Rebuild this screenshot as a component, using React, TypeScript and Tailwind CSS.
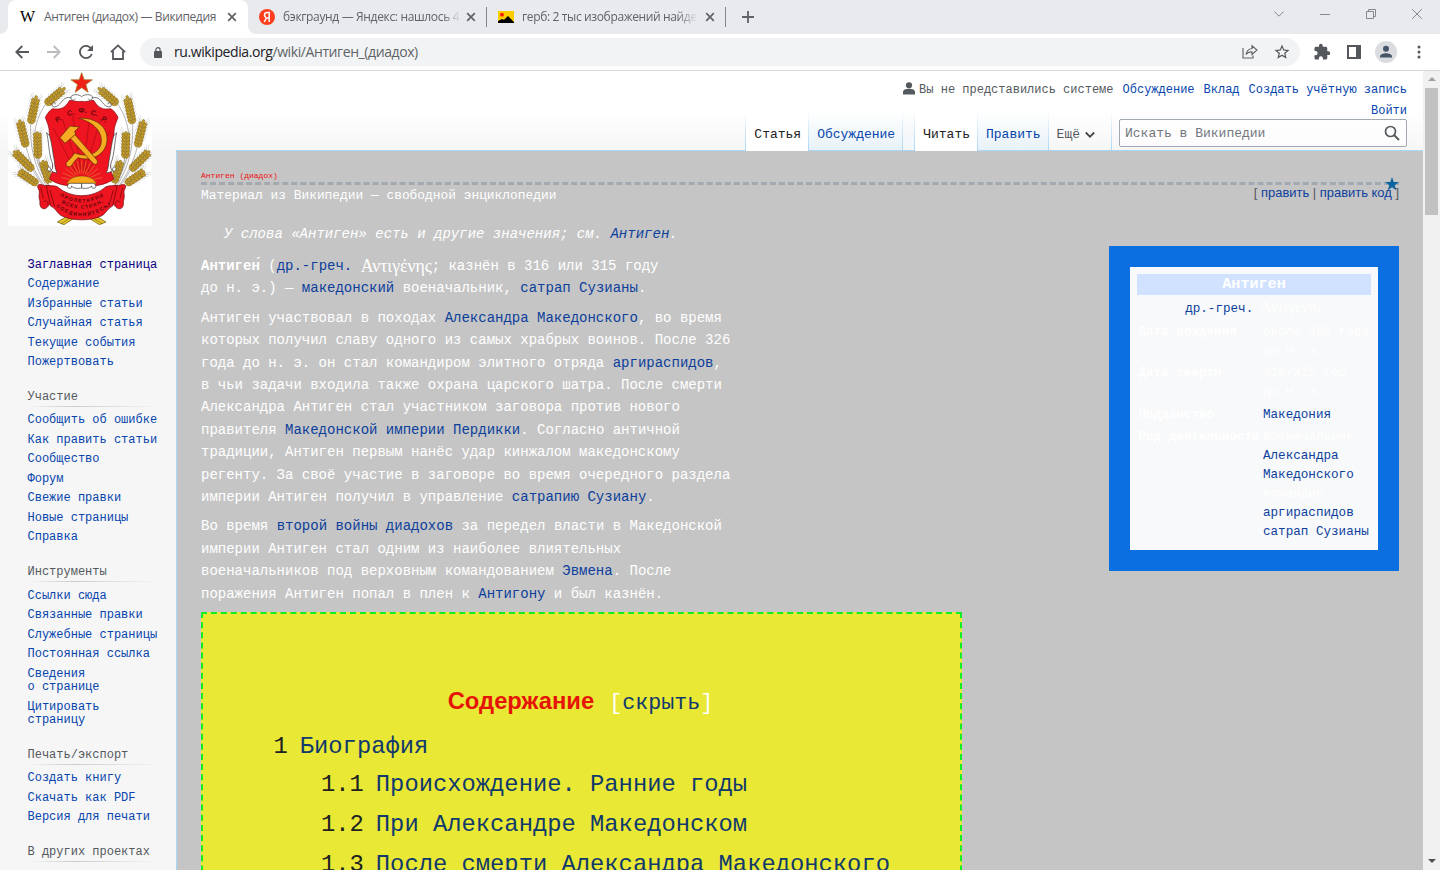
import type { ReactNode } from 'react';

const MONO = "font-['Liberation_Mono','Courier_New',monospace]";
const UI = "font-['Open_Sans','Noto_Sans',sans-serif]";

/* ---------- Browser chrome ---------- */

function CloseX({ className = '' }: { className?: string }) {
  return (
    <svg viewBox="0 0 10 10" className={`h-[10px] w-[10px] shrink-0 ${className}`}>
      <path d="M1.2 1.2 8.8 8.8M8.8 1.2 1.2 8.8" stroke="#5f6368" strokeWidth="1.7" fill="none" />
    </svg>
  );
}

function TabStrip() {
  return (
    <div className="flex h-[34px] shrink-0 items-stretch bg-[#e8eaed] text-[12px]">
      <div className="flex w-[8px] items-end bg-white">
        <div className="h-full w-[8px] rounded-br-[8px] bg-[#e8eaed]" />
      </div>
      <div className="flex w-[240px] items-center rounded-t-[8px] bg-white pl-[12px]">
        <span className="w-[24px] font-['Liberation_Serif',serif] text-[16px] leading-none tracking-[-1px] text-black">W</span>
        <span className="w-[175px] whitespace-nowrap text-[12px] tracking-[-0.38px] text-[#5f6368]">Антиген (диадох) — Википедия</span>
        <CloseX className="ml-[8px]" />
      </div>
      <div className="flex w-[8px] bg-white">
        <div className="h-full w-[8px] rounded-bl-[8px] bg-[#e8eaed]" />
      </div>
      <div className="flex w-[230px] items-center">
        <svg viewBox="0 0 16 16" className="ml-[3px] h-[16px] w-[16px]">
          <circle cx="8" cy="8" r="8" fill="#fc3f1d" />
          <path d="M10.2 13V3.500H8.4C6.600 3.500 5.500 4.600 5.500 6.100c0 1.300.7 2.100 1.900 2.900L5.200 13M10.200 9H8" fill="none" stroke="#fff" strokeWidth="1.5" />
        </svg>
        <span className="ml-[8px] w-[178px] overflow-hidden whitespace-nowrap text-[12px] tracking-[-0.34px] text-[#5f6368] [mask-image:linear-gradient(to_right,#000_90%,transparent)]">
          бэкграунд — Яндекс: нашлось 4
        </span>
        <CloseX className="ml-[5px]" />
      </div>
      <div className="my-[7px] w-px bg-[#80868b]" />
      <div className="flex w-[238px] items-center">
        <svg viewBox="0 0 16 12" className="ml-[11px] h-[12px] w-[16px]">
          <rect width="16" height="12" fill="#fc0" />
          <circle cx="4" cy="3.7" r="1.9" fill="#f8170d" />
          <path d="M0 12V10l4-2 2 .7L10 5l6 6v1z" fill="#000" />
        </svg>
        <span className="ml-[8px] w-[176px] overflow-hidden whitespace-nowrap text-[12px] tracking-[-0.36px] text-[#5f6368] [mask-image:linear-gradient(to_right,#000_88%,transparent)]">
          герб: 2 тыс изображений найде
        </span>
        <CloseX className="ml-[7px]" />
      </div>
      <div className="my-[7px] w-px bg-[#80868b]" />
      <div className="flex flex-1 items-center">
        <svg viewBox="0 0 12 12" className="ml-[16px] h-[12px] w-[12px]">
          <path d="M6 0v12M0 6h12" stroke="#5f6368" strokeWidth="1.8" />
        </svg>
      </div>
      <div className="flex items-center gap-[36px] pb-[6px] pr-[18px]">
        <svg viewBox="0 0 10 10" className="h-[10px] w-[10px]">
          <path d="M.3 2.5 5 7.2l4.7-4.7" fill="none" stroke="#85888c" strokeWidth="1" />
        </svg>
        <svg viewBox="0 0 10 10" className="h-[10px] w-[10px]">
          <path d="M0 5.5h10" stroke="#85888c" />
        </svg>
        <svg viewBox="0 0 10 10" className="h-[10px] w-[10px]">
          <path d="M.5 2.5h7v7h-7zM2.500 2.500V.5h7v7H7.500" fill="none" stroke="#85888c" />
        </svg>
        <svg viewBox="0 0 10 10" className="h-[10px] w-[10px]">
          <path d="M.2.2l9.600 9.600M9.800.2.2 9.800" stroke="#85888c" fill="none" />
        </svg>
      </div>
    </div>
  );
}

function Toolbar() {
  return (
    <div className="flex h-[37px] shrink-0 items-center border-b border-[#d5d7da] bg-white">
      <svg viewBox="0 0 14 14" className="ml-[15px] h-[14px] w-[14px]">
        <path d="M14 7H1.500M7.300 1 1.300 7l6 6" fill="none" stroke="#54575b" strokeWidth="1.8" />
      </svg>
      <svg viewBox="0 0 14 14" className="ml-[18px] h-[14px] w-[14px]">
        <path d="M0 7h12.500M6.700 1l6 6-6 6" fill="none" stroke="#b9bbbe" strokeWidth="1.8" />
      </svg>
      <svg viewBox="0 0 14 14" className="ml-[18px] h-[14px] w-[14px]">
        <path d="M12.800 9A6.100 6.100 0 1 1 11.500 2.800L12.500 4" fill="none" stroke="#54575b" strokeWidth="1.8" />
        <path d="M14 0v6H8z" fill="#54575b" />
      </svg>
      <svg viewBox="0 0 16 16" className="ml-[17px] h-[16px] w-[16px]">
        <path d="M.9 8.200 8 1.400l7.100 6.800M3 7v8h10V7" fill="none" stroke="#54575b" strokeWidth="1.800" />
      </svg>
      <div className="ml-[14px] flex h-[28px] w-[1160px] items-center rounded-full bg-[#f1f3f4]">
        <svg viewBox="0 0 8 11" className="ml-[14px] h-[11px] w-[8px]">
          <rect y="4" width="8" height="7" rx=".8" fill="#54575b" />
          <path d="M1.900 4.500V2.800a2.100 2.100 0 0 1 4.200 0v1.700" fill="none" stroke="#54575b" strokeWidth="1.200" />
        </svg>
        <span className="ml-[12px] flex-1 whitespace-nowrap pb-px text-[14px] tracking-[-0.41px] text-[#5f6368]">
          <span className="text-[#202124]">ru.wikipedia.org</span>/wiki/Антиген_(диадох)
        </span>
        <svg viewBox="0 0 16 16" className="h-[16px] w-[16px]">
          <path d="M1 4v10h10v-2.500M10 1.800V4.500C6.500 5 4.700 7 4 10.500 5.500 8.500 7.300 7.800 10 7.800v2.600L15 6z" fill="none" stroke="#5f6368" strokeWidth="1.150" />
        </svg>
        <svg viewBox="0 0 24 24" className="ml-[15px] mr-[9px] h-[18px] w-[18px]">
          <path d="m22 9.240-7.190-.62L12 2 9.190 8.630 2 9.240l5.460 4.730L5.820 21 12 17.270 18.180 21l-1.630-7.030L22 9.240zM12 15.400l-3.760 2.270 1-4.280-3.320-2.880 4.380-.38L12 6.100l1.710 4.040 4.380.38-3.320 2.880 1 4.280L12 15.400z" fill="#54575b" />
        </svg>
      </div>
      <svg viewBox="0 0 24 24" className="ml-[13px] h-[18px] w-[18px]">
        <path d="M20.500 11H19V7c0-1.100-.9-2-2-2h-4V3.500a2.500 2.500 0 0 0-5 0V5H4c-1.100 0-2 .9-2 2v3.800h1.500a2.700 2.700 0 0 1 0 5.400H2V20c0 1.100.9 2 2 2h3.800v-1.500a2.700 2.700 0 0 1 5.400 0V22H17c1.100 0 2-.9 2-2v-4h1.500a2.500 2.500 0 0 0 0-5z" fill="#54575b" />
      </svg>
      <svg viewBox="0 0 14 14" className="ml-[16px] h-[14px] w-[14px]">
        <path d="M0 0h14v14H0zM2 2v10h7V2z" fill="#54575b" fillRule="evenodd" />
      </svg>
      <svg viewBox="0 0 22 22" className="ml-[14px] h-[22px] w-[22px]">
        <circle cx="11" cy="11" r="11" fill="#dadce0" />
        <circle cx="11" cy="7.800" r="3" fill="#475569" />
        <path d="M5 16.500v-1c0-2 3.500-3.200 6-3.200s6 1.200 6 3.200v1z" fill="#475569" />
      </svg>
      <svg viewBox="0 0 4 14" className="ml-[20px] h-[14px] w-[4px]">
        <circle cx="2" cy="2" r="1.500" fill="#54575b" />
        <circle cx="2" cy="7" r="1.500" fill="#54575b" />
        <circle cx="2" cy="12" r="1.500" fill="#54575b" />
      </svg>
    </div>
  );
}

/* ---------- Emblem ---------- */

const EARS: [number, number, number, number][] = [
  [138, 114, 190, 70],
  [92, 172, 108, 96],
  [78, 242, 60, 168],
  [114, 276, 112, 204],
  [98, 312, 46, 260],
  [112, 354, 62, 320],
  [148, 350, 130, 290],
];

function Ear({ x1, y1, x2, y2 }: { x1: number; y1: number; x2: number; y2: number }) {
  const len = Math.hypot(x2 - x1, y2 - y1);
  const angle = (Math.atan2(y2 - y1, x2 - x1) * 180) / Math.PI;
  const rows = Math.floor(len / 10);
  const steps = Array.from({ length: rows }, (_, i) => 4 + i * 10);
  return (
    <g transform={`translate(${x1} ${y1}) rotate(${angle})`}>
      {steps.map((s) => (
        <path key={`w${s}`} d={`M${s} 0l24-19M${s} 0l24 19M${s + 5} 0l24-14M${s + 5} 0l24 14`} stroke="#8d8d84" strokeWidth=".7" />
      ))}
      {steps.map((s) => (
        <g key={s} fill="#c09a2c" stroke="#6f5514" strokeWidth="1.1">
          <ellipse cx={s + 3} cy="-6" rx="9" ry="5" transform={`rotate(-28 ${s + 3} -6)`} />
          <ellipse cx={s + 3} cy="6" rx="9" ry="5" transform={`rotate(28 ${s + 3} 6)`} />
        </g>
      ))}
      <ellipse cx={len} cy="0" rx="8" ry="4.500" fill="#c09a2c" stroke="#6f5514" />
    </g>
  );
}

function WheatSide() {
  return (
    <g>
      <g fill="none" stroke="#555" strokeWidth="1.3">
        <path d="M150 365C95 280 85 190 138 112" />
        <path d="M145 368C100 300 90 240 92 172" />
        <path d="M140 368C110 330 90 290 78 242" />
        <path d="M152 368C128 330 118 300 116 276" />
        <path d="M140 372C120 350 110 330 98 312" />
      </g>
      {EARS.map(([x1, y1, x2, y2]) => (
        <Ear key={`${x1}-${y1}`} x1={x1} y1={y1} x2={x2} y2={y2} />
      ))}
    </g>
  );
}

const RAYS = [-80, -66, -52, -39, -26, -13, 0, 13, 26, 39, 52, 66, 80];

function Scroll() {
  return (
    <g fill="#fff" stroke="#333" strokeWidth="2">
      <path d="M245 92c-8-8-28-8-32 0-2 11 9 14 12 6M213 96c-20-8-28 14-38 22-12 9-22 4-18-5 3-5 10-3 9 2" />
      <path d="M140 200c6 22 6 54 12 76 3 12 7 16 6 28-2 14-16 14-16 5 0-7 7-8 9-3 2 12 12 14 20 14-8-14-6-30-10-46-4-22-6-44-12-64z" />
      <path d="M245 352h-28c-14-4-20 14-8 15 5 0 7-4 5-7 8 8 22 8 31 6z" />
    </g>
  );
}

function Emblem() {
  return (
    <svg viewBox="24 18 432 462" className="h-[154px] w-[144px] bg-white">
      <WheatSide />
      <g transform="translate(490 0) scale(-1 1)">
        <WheatSide />
      </g>
      <path
        d="M245 106C228 110 216 100 208 104c-12 22-28 28-50 24-8 4-16 14-22 26 4 14 12 26 12 48 0 24 2 50 8 72 4 20 4 44-8 64 16 14 42 20 62 22h70c20-2 46-8 62-22-12-20-12-44-8-64 6-22 8-48 8-72 0-22 8-34 12-48-6-12-14-22-22-26-22 4-38-2-50-24-8-4-20 6-37 2z"
        fill="#ee1420"
        stroke="#7d0b10"
        strokeWidth="2"
      />
      <g stroke="#a60d14" strokeWidth="2">
        <path d="M226 318 160 186M236 314 188 160M243 312 218 150M250 312 268 160M256 314 302 158M264 318 328 196" />
      </g>
      <g stroke="#e2752b" strokeWidth="2">
        {RAYS.map((a) => (
          <path key={a} d="M245 322V284" transform={`rotate(${a} 245 346)`} />
        ))}
      </g>
      <path d="M201 354c8-32 80-32 88 0z" fill="#f5a81c" stroke="#8f3b0a" strokeWidth="2" />
      <Scroll />
      <g transform="translate(490 0) scale(-1 1)">
        <Scroll />
      </g>
      <g fill="#6b080d" className="font-['Liberation_Sans',sans-serif] text-[22px] font-bold">
        <text x="166" y="168" transform="rotate(-28 172 160)">Р.</text>
        <text x="201" y="149" transform="rotate(-12 208 142)">С.</text>
        <text x="235" y="140">Ф.</text>
        <text x="272" y="148" transform="rotate(14 278 142)">С.</text>
        <text x="304" y="166" transform="rotate(28 310 160)">Р.</text>
      </g>
      <g fill="#f5ab22" stroke="#64300a" strokeWidth="2.2" strokeLinejoin="round">
        <path d="M236 157c46-4 88 22 85 66-2 40-44 66-87 52-8 6-14 16-20 24-8 8-20 0-14-10 8-8 18-18 24-28 34 14 76 4 80-34 2-34-28-60-68-70z" />
        <path d="m210 216 13-12 68 78c5 10-4 18-12 10z" />
        <path d="m180 215 30-35 28 3-14 13 3 8-32 28z" />
      </g>
      <path d="m245 20 7.500 21.500h24.500l-19.500 14 7 23.500L245 65l-19.500 14 7-23.500-19.500-14h24.500z" fill="#ef2016" stroke="#af7b2a" strokeWidth="2.500" />
      <path d="m172 468 40-24 18 8-38 24zM318 468l-40-24-18 8 38 24z" fill="#e4c529" stroke="#654e10" strokeWidth="2" />
      <path d="m182 474 38-24M308 474l-38-24" stroke="#654e10" strokeWidth="1.500" />
      <g fill="#ee1420" stroke="#6f090d" strokeWidth="2.200" strokeLinejoin="round">
        <path d="M150 360c-18 2-30-10-36-2-4 8 6 12 4 24-2 10 0 18 2 24-2 14 4 24 14 22 14-4 10-14 20-14l18 18z" />
        <path d="M340 360c18 2 30-10 36-2 4 8-6 12-4 24 2 10 0 18-2 24 2 14-4 24-14 22-14-4-10-14-20-14l-18 18z" />
        <path d="M138 358c14 2 24 0 34 4 40 36 106 36 146 0 10-4 20-2 34-4l-14 62c-14 6-18 18-30 28-34 18-92 18-126 0-12-10-16-22-30-28z" />
        <path d="M130 408c10-8 18 2 12 10M360 408c-10-8-18 2-12 10M122 364l8 34M368 364l-8 34M150 372l14 50M340 372l-14 50" fill="none" />
      </g>
      <path id="motto-a" d="M176 388Q245 432 318 386" fill="none" />
      <path id="motto-b" d="M180 408Q245 450 314 406" fill="none" />
      <path id="motto-c" d="M166 420Q245 482 330 418" fill="none" />
      <g fill="#5c070b" className="font-['Liberation_Sans',sans-serif] text-[15px] font-bold">
        <text>
          <textPath href="#motto-a" startOffset="4" textLength="138">ПРОЛЕТАРИИ</textPath>
        </text>
        <text>
          <textPath href="#motto-b" startOffset="4" textLength="134">ВСЕХ СТРАН,</textPath>
        </text>
        <text>
          <textPath href="#motto-c" startOffset="2" textLength="178">СОЕДИНЯЙТЕСЬ!</textPath>
        </text>
      </g>
    </svg>
  );
}

/* ---------- Sidebar ---------- */

const SECTIONS: { title?: string; items: ReactNode[] }[] = [
  {
    title: 'Участие',
    items: ['Сообщить об ошибке', 'Как править статьи', 'Сообщество', 'Форум', 'Свежие правки', 'Новые страницы', 'Справка'],
  },
  {
    title: 'Инструменты',
    items: [
      'Ссылки сюда',
      'Связанные правки',
      'Служебные страницы',
      'Постоянная ссылка',
      <>Сведения<br />о странице</>,
      <>Цитировать<br />страницу</>,
    ],
  },
  { title: 'Печать/экспорт', items: ['Создать книгу', 'Скачать как PDF', 'Версия для печати'] },
  { title: 'В других проектах', items: [] },
];

function NavItem({ children, visited = false }: { children: ReactNode; visited?: boolean }) {
  return <li className={`py-[3px] ${visited ? 'text-[#0b0080]' : 'text-[#0645ad]'}`}>{children}</li>;
}

function Sidebar() {
  return (
    <nav className="w-[176px] shrink-0 whitespace-nowrap pt-px text-[12px] leading-[13.5px]">
      <div className="ml-[8px] h-[154px]">
        <Emblem />
      </div>
      <ul className="ml-[27.500px] mt-[29.500px]">
        <NavItem visited>Заглавная страница</NavItem>
        <NavItem>Содержание</NavItem>
        <NavItem>Избранные статьи</NavItem>
        <NavItem>Случайная статья</NavItem>
        <NavItem>Текущие события</NavItem>
        <NavItem>Пожертвовать</NavItem>
      </ul>
      {SECTIONS.map((s) => (
        <section key={s.title}>
          <h3 className="ml-[27.500px] pb-[2px] pt-[18px] text-[#54595d]">{s.title}</h3>
          <div className="ml-[27px] h-px w-[133px] bg-gradient-to-r from-transparent via-[#c8ccd1] via-35% to-transparent" />
          <ul className="ml-[27.500px] mt-[4.250px]">
            {s.items.map((it, i) => (
              <NavItem key={i}>{it}</NavItem>
            ))}
          </ul>
        </section>
      ))}
    </nav>
  );
}

/* ---------- Page header ---------- */

function Separator() {
  return <div className="w-px bg-gradient-to-b from-transparent to-[#a7d7f9]" />;
}

function Tab({ children, selected = false, plain = false }: { children: ReactNode; selected?: boolean; plain?: boolean }) {
  const tone = selected
    ? 'bg-white text-[#202122]'
    : plain
      ? 'border-b border-[#a7d7f9] text-[#54595d]'
      : 'border-b border-[#a7d7f9] bg-gradient-to-b from-white to-[#e8f2f8] text-[#0645ad]';
  return <div className={`flex pl-[8px] pr-[7px] pt-[16px] leading-[16px] ${tone}`}>{children}</div>;
}

function PageHeader() {
  return (
    <header className="flex h-[80px] shrink-0 flex-col">
      <div className="h-[40px] pr-[16px] text-[12px] leading-[21px] text-[#0645ad]">
        <div className="flex justify-end gap-[9px] pt-[8.500px]">
          <span className="flex items-center gap-[4px] text-[#54595d]">
            <svg viewBox="0 0 12 13" className="mb-[3px] h-[13px] w-[12px]">
              <circle cx="6" cy="3.300" r="3.100" fill="#54595d" />
              <path d="M0 12.500V10c0-1.900 2-3 4-3h4c2 0 4 1.100 4 3v2.500z" fill="#54595d" />
            </svg>
            Вы не представились системе
          </span>
          <span>Обсуждение</span>
          <span>Вклад</span>
          <span>Создать учётную запись</span>
        </div>
        <div className="text-right">Войти</div>
      </div>
      <div className="flex h-[40px] items-stretch text-[13px]">
        <div className="flex-1 border-b border-[#a7d7f9]" />
        <Separator />
        <Tab selected>Статья</Tab>
        <Separator />
        <Tab>Обсуждение</Tab>
        <Separator />
        <div className="w-[11px] border-b border-[#a7d7f9] bg-gradient-to-b from-transparent to-[#f2f7fa]" />
        <Separator />
        <Tab selected>Читать</Tab>
        <Separator />
        <Tab>Править</Tab>
        <Separator />
        <Tab plain>
          Ещё
          <svg viewBox="0 0 10 8" className="ml-[5px] mr-[9px] mt-[4px] h-[8px] w-[10px]">
            <path d="m.8 1.500 4.200 4.300 4.200-4.300" fill="none" stroke="#404244" strokeWidth="1.800" />
          </svg>
        </Tab>
        <Separator />
        <div className="border-b border-[#a7d7f9] pl-[7px] pr-[16px] pt-[8px]">
          <div className="flex h-[28px] w-[288px] items-center rounded-[2px] border border-[#a2a9b1] bg-white/60 pl-[5px] pr-[6px] text-[#72777d]">
            <span className="flex-1 pt-px">Искать в Википедии</span>
            <svg viewBox="0 0 16 16" className="h-[16px] w-[16px]">
              <circle cx="6.500" cy="6.500" r="5" fill="none" stroke="#54595d" strokeWidth="1.700" />
              <path d="m10 10 5 5" stroke="#54595d" strokeWidth="2" />
            </svg>
          </div>
        </div>
      </div>
    </header>
  );
}

/* ---------- Article ---------- */

function A({ children }: { children: ReactNode }) {
  return <span className="text-[#0c3f9c]">{children}</span>;
}

function InfoRow({ label, children }: { label: string; children: ReactNode }) {
  return (
    <div className="flex">
      <div className="w-[124.500px] shrink-0 font-bold">{label}</div>
      <div>{children}</div>
    </div>
  );
}

function Infobox() {
  return (
    <aside className="mt-[23px] h-[325px] w-[290px] shrink-0 whitespace-nowrap border-[21px] border-[#0b6fe2] bg-[#f8f9fa] p-[7px] text-[12.600px] leading-[19px] text-white">
      <div className="h-[21px] bg-[#d0e2ff] text-center text-[15.120px] font-bold leading-[20px]">Антиген</div>
      <div className="mt-[4px] h-[19px] text-center leading-[19px]">
        <A>др.-греч.</A> <span className="font-['Liberation_Serif',serif] text-[15.500px] leading-none">Αντιγένης</span>
      </div>
      <div className="ml-[1.500px] mt-[4.500px] flex flex-col gap-[3.600px]">
        <InfoRow label="Дата рождения">около 380 года<br />до н. э.</InfoRow>
        <InfoRow label="Дата смерти">316/315 год<br />до н. э.</InfoRow>
        <InfoRow label="Подданство"><A>Македония</A></InfoRow>
        <InfoRow label="Род деятельности">
          военачальник<br />
          <A>Александра<br />Македонского</A><br />
          командир<br />
          <A>аргираспидов<br />сатрап Сузианы</A>
        </InfoRow>
      </div>
    </aside>
  );
}

function TocRow({ n, children, nested = false }: { n: string; children: ReactNode; nested?: boolean }) {
  return (
    <li className={`flex items-center gap-[12px] text-[23.800px] text-[#10396c] ${nested ? 'ml-[118px] h-[40px]' : 'ml-[70.500px] h-[36px]'}`}>
      <span className="text-[#202122]">{n}</span>
      <span>{children}</span>
    </li>
  );
}

function Toc() {
  return (
    <div className="mt-[7px] h-[300px] w-[761px] overflow-hidden whitespace-nowrap border-2 border-dashed border-[#10ed23] bg-[#e9e834] pt-[70px]">
      <div className="flex h-[35px] items-baseline justify-center pr-[2px] leading-[34px]">
        <h2 className="font-['Liberation_Sans',Arial,sans-serif] text-[23.800px] font-bold text-[#e51409]">Содержание</h2>
        <span className="ml-[15px] text-[21.700px] text-white">[<span className="text-[#10396c]">скрыть</span>]</span>
      </div>
      <ul className="mt-[10.500px]">
        <TocRow n="1">Биография</TocRow>
        <TocRow n="1.1" nested>Происхождение. Ранние годы</TocRow>
        <TocRow n="1.2" nested>При Александре Македонском</TocRow>
        <TocRow n="1.3" nested>После смерти Александра Македонского</TocRow>
      </ul>
    </div>
  );
}

function Article() {
  return (
    <main className="min-h-0 flex-1 overflow-hidden border-l border-[#a7d7f9] bg-[#c5c5c5] pl-[24px] pr-[24px] text-[14px] leading-[22.400px] text-white">
      <div className="relative flex h-[34px] items-end border-b-[3px] border-dashed border-[#a2a9b1]">
        <h1 className="text-[8px] leading-[12px] text-[#f00f14]">Антиген (диадох)</h1>
        <svg viewBox="0 0 14 14" className="absolute -bottom-[9px] right-0 h-[14px] w-[14px]">
          <path d="m7 0 1.700 5H14L9.700 8.200 11.400 13.500 7 10.200 2.600 13.500 4.300 8.200 0 5h5.300z" fill="#0b64a0" />
        </svg>
      </div>
      <div className="flex h-[38px] justify-between whitespace-nowrap">
        <div className="pt-px text-[12.880px] leading-[20px]">Материал из Википедии — свободной энциклопедии</div>
        <div className="font-['Liberation_Sans',Arial,sans-serif] text-[12.950px] leading-[16px] text-[#54595d]">
          [ <A>править</A> | <A>править код</A> ]
        </div>
      </div>
      <div className="flex items-start justify-between whitespace-nowrap">
        <div>
          <p className="pl-[23px] italic">У слова «Антиген» есть и другие значения; см. <A>Антиген</A>.</p>
          <p className="mt-[9.500px]">
            <b>Антиген́</b> (<A>др.-греч.</A>{' '}
            <span className="inline-block h-[22px] w-[71px] align-bottom font-['Liberation_Serif',serif] text-[17.800px]">Αντιγένης</span>; казнён в 316 или 315 году<br />
            до н. э.) — <A>македонский</A> военачальник, <A>сатрап Сузианы</A>.
          </p>
          <p className="mt-[7px]">
            Антиген участвовал в походах <A>Александра Македонского</A>, во время<br />
            которых получил славу одного из самых храбрых воинов. После 326<br />
            года до н. э. он стал командиром элитного отряда <A>аргираспидов</A>,<br />
            в чьи задачи входила также охрана царского шатра. После смерти<br />
            Александра Антиген стал участником заговора против нового<br />
            правителя <A>Македонской империи</A> <A>Пердикки</A>. Согласно античной<br />
            традиции, Антиген первым нанёс удар кинжалом македонскому<br />
            регенту. За своё участие в заговоре во время очередного раздела<br />
            империи Антиген получил в управление <A>сатрапию Сузиану</A>.
          </p>
          <p className="mt-[7px]">
            Во время <A>второй войны диадохов</A> за передел власти в Македонской<br />
            империи Антиген стал одним из наиболее влиятельных<br />
            военачальников под верховным командованием <A>Эвмена</A>. После<br />
            поражения Антиген попал в плен к <A>Антигону</A> и был казнён.
          </p>
          <Toc />
        </div>
        <Infobox />
      </div>
    </main>
  );
}

function Scrollbar() {
  return (
    <div className="flex w-[17px] shrink-0 flex-col items-center justify-between bg-[#f1f1f1]">
      <div className="flex flex-col items-center">
        <svg viewBox="0 0 8 4" className="mb-[7px] mt-[6px] h-[4px] w-[8px]">
          <path d="M0 4 4 0l4 4z" fill="#a3a3a3" />
        </svg>
        <div className="h-[127px] w-[13px] bg-[#c1c1c1]" />
      </div>
      <svg viewBox="0 0 8 4" className="mb-[7px] h-[4px] w-[8px]">
        <path d="M0 0h8L4 4z" fill="#505050" />
      </svg>
    </div>
  );
}

export default function App() {
  return (
    <div className="flex h-[870px] w-[1440px] flex-col overflow-hidden">
      <div className={UI}>
        <TabStrip />
        <Toolbar />
      </div>
      <div className={`flex min-h-0 flex-1 ${MONO}`}>
        <div className="flex min-w-0 flex-1 overflow-hidden bg-[#f6f6f6] bg-[linear-gradient(to_bottom,#fff_50%,#f6f6f6)] bg-[length:100%_80px] bg-no-repeat">
          <Sidebar />
          <div className="flex min-w-0 flex-1 flex-col">
            <PageHeader />
            <Article />
          </div>
        </div>
        <Scrollbar />
      </div>
    </div>
  );
}
